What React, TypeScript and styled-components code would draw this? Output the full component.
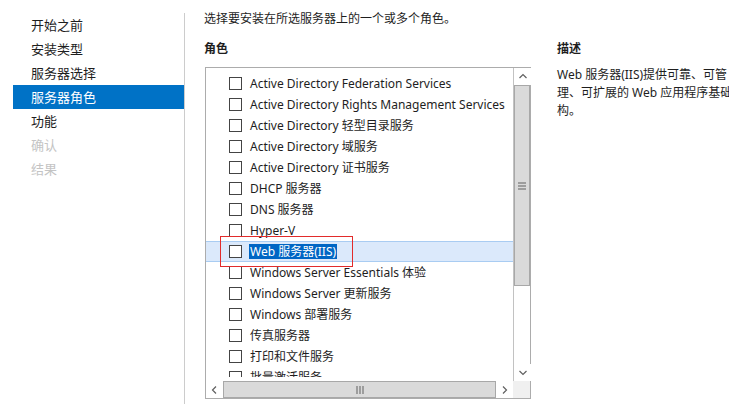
import React from "react";
import styled, { createGlobalStyle } from "styled-components";

const GlobalStyle = createGlobalStyle`
	html, body {
		margin: 0;
		padding: 0;
		background: #ffffff;
		overflow: hidden;
	}
	body {
		font-family: "Segoe UI", "Noto Sans", "Noto Sans CJK SC", sans-serif;
		color: #1e1e1e;
	}
`;

const Page = styled.div`
	display: flex;
	width: 729px;
	height: 404px;
	overflow: hidden;
`;

const Nav = styled.ul`
	list-style: none;
	margin: 13px 0 0 0;
	padding: 0 0 0 13px;
	width: 171px;
	border-right: 1px solid #cccccc;
	flex-shrink: 0;
`;

const NavItem = styled.li<{ $active?: boolean; $disabled?: boolean }>`
	height: 24px;
	line-height: 24px;
	padding-left: 18px;
	font-size: 13px;
	background: ${(p) => (p.$active ? "#0072c6" : "transparent")};
	color: ${(p) => (p.$active ? "#ffffff" : p.$disabled ? "#c4c4c4" : "#1e1e1e")};
`;

const Main = styled.div`
	flex: 1;
	padding: 11px 0 0 19px;
	font-size: 12px;
	min-width: 0;
`;

const Intro = styled.div`
	line-height: 16px;
	white-space: nowrap;
`;

const Columns = styled.div`
	display: flex;
	gap: 26px;
	margin-top: 14px;
`;

const Column = styled.div`
	display: flex;
	flex-direction: column;
	flex-shrink: 0;
`;

const Label = styled.div`
	font-weight: bold;
	line-height: 16px;
`;

const ListBox = styled.div`
	margin-top: 10px;
	margin-left: 1px;
	width: 324px;
	height: 330px;
	border: 1px solid #acacac;
	display: grid;
	grid-template-columns: 1fr 17px;
	grid-template-rows: 1fr 17px;
`;

const ListContent = styled.div`
	position: relative;
	overflow: hidden;
	padding-top: 5px;
	border-bottom: 4px solid #ffffff;
`;

const Row = styled.div<{ $selected?: boolean }>`
	display: flex;
	align-items: center;
	height: 21px;
	box-sizing: border-box;
	padding-left: 23px;
	gap: 7px;
	white-space: nowrap;
	background: ${(p) => (p.$selected ? "#dbe9fb" : "transparent")};
	border-top: 1px solid ${(p) => (p.$selected ? "#a9ccf2" : "transparent")};
	border-bottom: 1px solid ${(p) => (p.$selected ? "#a9ccf2" : "transparent")};
`;

const Check = styled.span`
	width: 11px;
	height: 11px;
	border: 1px solid #444444;
	background: #ffffff;
	flex-shrink: 0;
`;

const RowText = styled.span<{ $selected?: boolean }>`
	line-height: 15px;
	padding: 0 1px;
	background: ${(p) => (p.$selected ? "#0066c4" : "transparent")};
	color: ${(p) => (p.$selected ? "#ffffff" : "#1e1e1e")};
`;

const Callout = styled.div`
	position: absolute;
	left: 14px;
	top: 168px;
	width: 131px;
	height: 29px;
	border: 1px solid #e22b2b;
	pointer-events: none;
`;

const VScroll = styled.div`
	display: flex;
	flex-direction: column;
	background: #ffffff;
	border-left: 1px solid #c2c2c2;
	box-sizing: border-box;
`;

const HScroll = styled.div`
	display: flex;
	background: #ffffff;
	box-sizing: border-box;
`;

const ArrowButton = styled.div`
	width: 17px;
	height: 17px;
	display: flex;
	align-items: center;
	justify-content: center;
	flex-shrink: 0;
	background: #ffffff;
`;

const Thumb = styled.div<{ $horizontal?: boolean }>`
	display: flex;
	align-items: center;
	justify-content: center;
	background: #dadada;
	border: 1px solid #a8a8a8;
	box-sizing: border-box;
	${(p) => (p.$horizontal ? "flex: 1; height: 100%;" : "height: 201px; width: 100%;")}
`;

const Track = styled.div`
	flex: 1;
`;

const Corner = styled.div`
	background: #f0f0f0;
`;

const DescText = styled.div`
	margin-top: 9px;
	line-height: 18px;
	white-space: nowrap;
`;

const Chevron = ({ dir }: { dir: "up" | "down" | "left" | "right" }) => {
	const paths: Record<string, string> = {
		up: "M1.5 6 L5 2.5 L8.5 6",
		down: "M1.5 3 L5 6.5 L8.5 3",
		left: "M6 1.5 L2.5 5 L6 8.5",
		right: "M3 1.5 L6.5 5 L3 8.5",
	};
	return (
		<svg width="10" height="10" viewBox="0 0 10 10">
			<path d={paths[dir]} fill="none" stroke="#606060" strokeWidth="1.2" />
		</svg>
	);
};

const Grip = ({ horizontal }: { horizontal?: boolean }) => (
	<svg width="8" height="8" viewBox="0 0 8 8">
		{[1, 4, 7].map((v) =>
			horizontal ? (
				<line key={v} x1={v} y1="0" x2={v} y2="8" stroke="#606060" strokeWidth="1" />
			) : (
				<line key={v} x1="0" y1={v} x2="8" y2={v} stroke="#606060" strokeWidth="1" />
			)
		)}
	</svg>
);

const navItems = [
	{ name: "开始之前" },
	{ name: "安装类型" },
	{ name: "服务器选择" },
	{ name: "服务器角色", active: true },
	{ name: "功能" },
	{ name: "确认", disabled: true },
	{ name: "结果", disabled: true },
];

const roles = [
	"Active Directory Federation Services",
	"Active Directory Rights Management Services",
	"Active Directory 轻型目录服务",
	"Active Directory 域服务",
	"Active Directory 证书服务",
	"DHCP 服务器",
	"DNS 服务器",
	"Hyper-V",
	"Web 服务器(IIS)",
	"Windows Server Essentials 体验",
	"Windows Server 更新服务",
	"Windows 部署服务",
	"传真服务器",
	"打印和文件服务",
	"批量激活服务",
];

const selectedRole = "Web 服务器(IIS)";

export default function App() {
	return (
		<>
			<GlobalStyle />
			<Page>
				<Nav>
					{navItems.map((item) => (
						<NavItem key={item.name} $active={item.active} $disabled={item.disabled}>
							{item.name}
						</NavItem>
					))}
				</Nav>
				<Main>
					<Intro>选择要安装在所选服务器上的一个或多个角色。</Intro>
					<Columns>
						<Column>
							<Label>角色</Label>
							<ListBox>
								<ListContent>
									{roles.map((role) => {
										const selected = role === selectedRole;
										return (
											<Row key={role} $selected={selected}>
												<Check />
												<RowText $selected={selected}>{role}</RowText>
											</Row>
										);
									})}
									<Callout />
								</ListContent>
								<VScroll>
									<ArrowButton>
										<Chevron dir="up" />
									</ArrowButton>
									<Thumb>
										<Grip />
									</Thumb>
									<Track />
									<ArrowButton>
										<Chevron dir="down" />
									</ArrowButton>
								</VScroll>
								<HScroll>
									<ArrowButton>
										<Chevron dir="left" />
									</ArrowButton>
									<Thumb $horizontal>
										<Grip horizontal />
									</Thumb>
									<ArrowButton>
										<Chevron dir="right" />
									</ArrowButton>
								</HScroll>
								<Corner />
							</ListBox>
						</Column>
						<Column>
							<Label>描述</Label>
							<DescText>
								Web 服务器(IIS)提供可靠、可管
								<br />
								理、可扩展的 Web 应用程序基础结
								<br />
								构。
							</DescText>
						</Column>
					</Columns>
				</Main>
			</Page>
		</>
	);
}
